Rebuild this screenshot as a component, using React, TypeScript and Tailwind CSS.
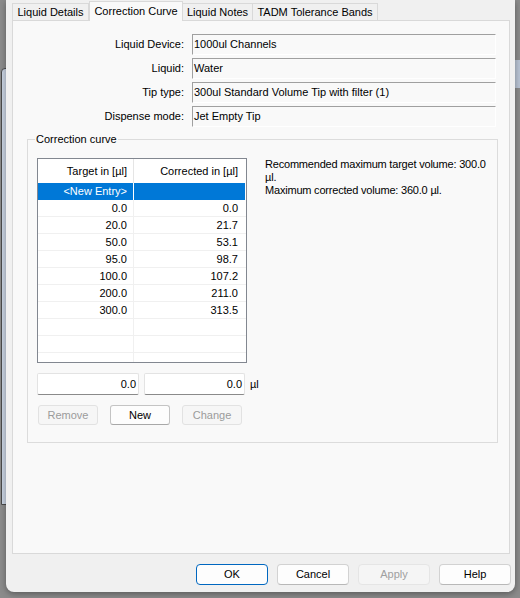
import React from 'react';

const rows: [string, string][] = [
    ['0.0', '0.0'],
    ['20.0', '21.7'],
    ['50.0', '53.1'],
    ['95.0', '98.7'],
    ['100.0', '107.2'],
    ['200.0', '211.0'],
    ['300.0', '313.5'],
];

const fields: [string, string][] = [
    ['Liquid Device:', '1000ul Channels'],
    ['Liquid:', 'Water'],
    ['Tip type:', '300ul Standard Volume Tip with filter (1)'],
    ['Dispense mode:', 'Jet Empty Tip'],
];

function Tab({ label, width, active }: { label: string; width: string; active?: boolean }) {
    if (active) {
        return (
            <div className={`${width} relative z-10 -mb-px flex h-[20px] items-start justify-center border border-b-0 border-[#d9d9d9] bg-[#f9f9f9] pt-[3px] leading-[13px]`}>
                {label}
            </div>
        );
    }
    return (
        <div className={`${width} -ml-px flex h-[17px] items-center justify-center border border-b-0 border-[#d9d9d9] bg-[#f0f0f0] pt-px leading-[13px] first:ml-0`}>
            {label}
        </div>
    );
}

function SmallButton({ label, disabled }: { label: string; disabled?: boolean }) {
    return (
        <div
            className={
                disabled
                    ? 'flex h-[20px] w-[60px] items-center justify-center rounded-[3px] border border-[#e2e2e2] bg-[#f6f6f6] text-[#9b9b9b]'
                    : 'flex h-[20px] w-[60px] items-center justify-center rounded-[3px] border border-[#c4c4c4] border-b-[#a8a8a8] bg-[#fdfdfd] text-black'
            }
        >
            {label}
        </div>
    );
}

function DialogButton({ label, variant }: { label: string; variant?: 'default' | 'disabled' }) {
    let cls = 'flex h-[21px] w-[72px] items-center justify-center rounded-[4px] border border-[#d2d2d2] border-b-[#b8b8b8] bg-[#fdfdfd] text-black';
    if (variant === 'default') cls = 'flex h-[21px] w-[72px] items-center justify-center rounded-[4px] border border-[#0067c0] bg-[#fdfdfd] text-black';
    if (variant === 'disabled') cls = 'flex h-[21px] w-[72px] items-center justify-center rounded-[4px] border border-[#e5e5e5] bg-[#f5f5f5] text-[#a0a0a0]';
    return <div className={cls}>{label}</div>;
}

export default function App() {
    return (
        <div className="relative h-[598px] w-[520px] overflow-hidden bg-[#8b8b8b] font-['Liberation_Sans',Arial,sans-serif] text-[11px] text-black">
            {/* windows behind the dialog */}
            <div className="absolute left-px top-[68px] h-[437px] w-[20px] rounded-tl-[4px] border border-[#4a4a4a] bg-[#c9d3e2]" />
            <div className="absolute right-0 top-[60px] h-[28px] w-[8px] bg-[#b9c4d4]" />

            {/* dialog */}
            <div className="absolute left-[6px] top-0 flex h-[592px] w-[509px] flex-col rounded-b-[8px] bg-[#f0f0f0] shadow-[0_2px_6px_rgba(0,0,0,0.35)]">
                {/* tab strip */}
                <div className="flex h-[20px] items-end pl-[6px]">
                    <Tab label="Liquid Details" width="w-[77px]" />
                    <Tab label="Correction Curve" width="w-[94px]" active />
                    <Tab label="Liquid Notes" width="w-[71px]" />
                    <Tab label="TADM Tolerance Bands" width="w-[126px]" />
                </div>

                {/* tab page */}
                <div className="ml-[6px] h-[534px] w-[498px] border border-[#d9d9d9] bg-[#f9f9f9] pt-[13px]">
                    <div className="flex flex-col gap-[3px]">
                        {fields.map(([label, value]) => (
                            <div key={label} className="flex h-[21px] items-center gap-[8px]">
                                <div className="w-[171px] text-right leading-[13px]">{label}</div>
                                <div className="flex h-[21px] w-[304px] items-center border border-[#a0a0a0] border-b-white border-r-white bg-[#f9f9f9] pl-px leading-[13px]">
                                    {value}
                                </div>
                            </div>
                        ))}
                    </div>

                    {/* group box */}
                    <div className="relative ml-[14px] mt-[12px] h-[304px] w-[471px] border border-[#dcdcdc] pl-[9px] pt-[18px]">
                        <span className="absolute left-[7px] top-[-7px] bg-[#f9f9f9] px-px leading-[13px]">Correction curve</span>

                        <div className="flex gap-[18px]">
                            <div className="flex w-[210px] shrink-0 flex-col">
                                {/* list view */}
                                <div className="h-[205px] w-[210px] overflow-hidden border border-[#828790] bg-white">
                                    <div className="flex h-[24px]">
                                        <div className="flex w-[96px] items-center justify-end border-r border-[#e5e5e5] pr-[6px]">Target in [µl]</div>
                                        <div className="flex w-[111px] items-center justify-end pr-[7px]">Corrected in [µl]</div>
                                    </div>
                                    <div className="flex h-[17px] text-white">
                                        <div className="flex w-[96px] items-center justify-end border-r border-white bg-[#0078d7] pr-[6px]">&lt;New Entry&gt;</div>
                                        <div className="w-[111px] bg-[#0078d7]" />
                                    </div>
                                    {rows.map(([t, c]) => (
                                        <div key={t} className="flex h-[17px] border-b border-[#f0f0f0]">
                                            <div className="flex w-[96px] items-center justify-end border-r border-[#f0f0f0] pr-[6px]">{t}</div>
                                            <div className="flex w-[111px] items-center justify-end pr-[7px]">{c}</div>
                                        </div>
                                    ))}
                                    {[0, 1, 2].map((i) => (
                                        <div key={i} className="flex h-[17px] border-b border-[#f0f0f0]">
                                            <div className="w-[96px] border-r border-[#f0f0f0]" />
                                        </div>
                                    ))}
                                </div>

                                {/* entry fields */}
                                <div className="mt-[10px] flex items-center gap-[5px] whitespace-nowrap">
                                    <div className="flex h-[22px] w-[102px] shrink-0 items-center justify-end rounded-[2px] border border-[#e3e3e3] border-b-[#8a8a8a] bg-white pr-[2px]">0.0</div>
                                    <div className="flex h-[22px] w-[101px] shrink-0 items-center justify-end rounded-[2px] border border-[#e3e3e3] border-b-[#8a8a8a] bg-white pr-[2px]">0.0</div>
                                    <span className="leading-[13px]">µl</span>
                                </div>

                                {/* list buttons */}
                                <div className="ml-px mt-[10px] flex gap-[12px]">
                                    <SmallButton label="Remove" disabled />
                                    <SmallButton label="New" />
                                    <SmallButton label="Change" disabled />
                                </div>
                            </div>

                            <div className="whitespace-nowrap leading-[13px] tracking-[-0.2px]">
                                Recommended maximum target volume: 300.0
                                <br />
                                µl.
                                <br />
                                Maximum corrected volume: 360.0 µl.
                            </div>
                        </div>
                    </div>
                </div>

                {/* dialog buttons */}
                <div className="mt-[10px] flex justify-end gap-[9px] pr-[4px]">
                    <DialogButton label="OK" variant="default" />
                    <DialogButton label="Cancel" />
                    <DialogButton label="Apply" variant="disabled" />
                    <DialogButton label="Help" />
                </div>
            </div>
        </div>
    );
}
